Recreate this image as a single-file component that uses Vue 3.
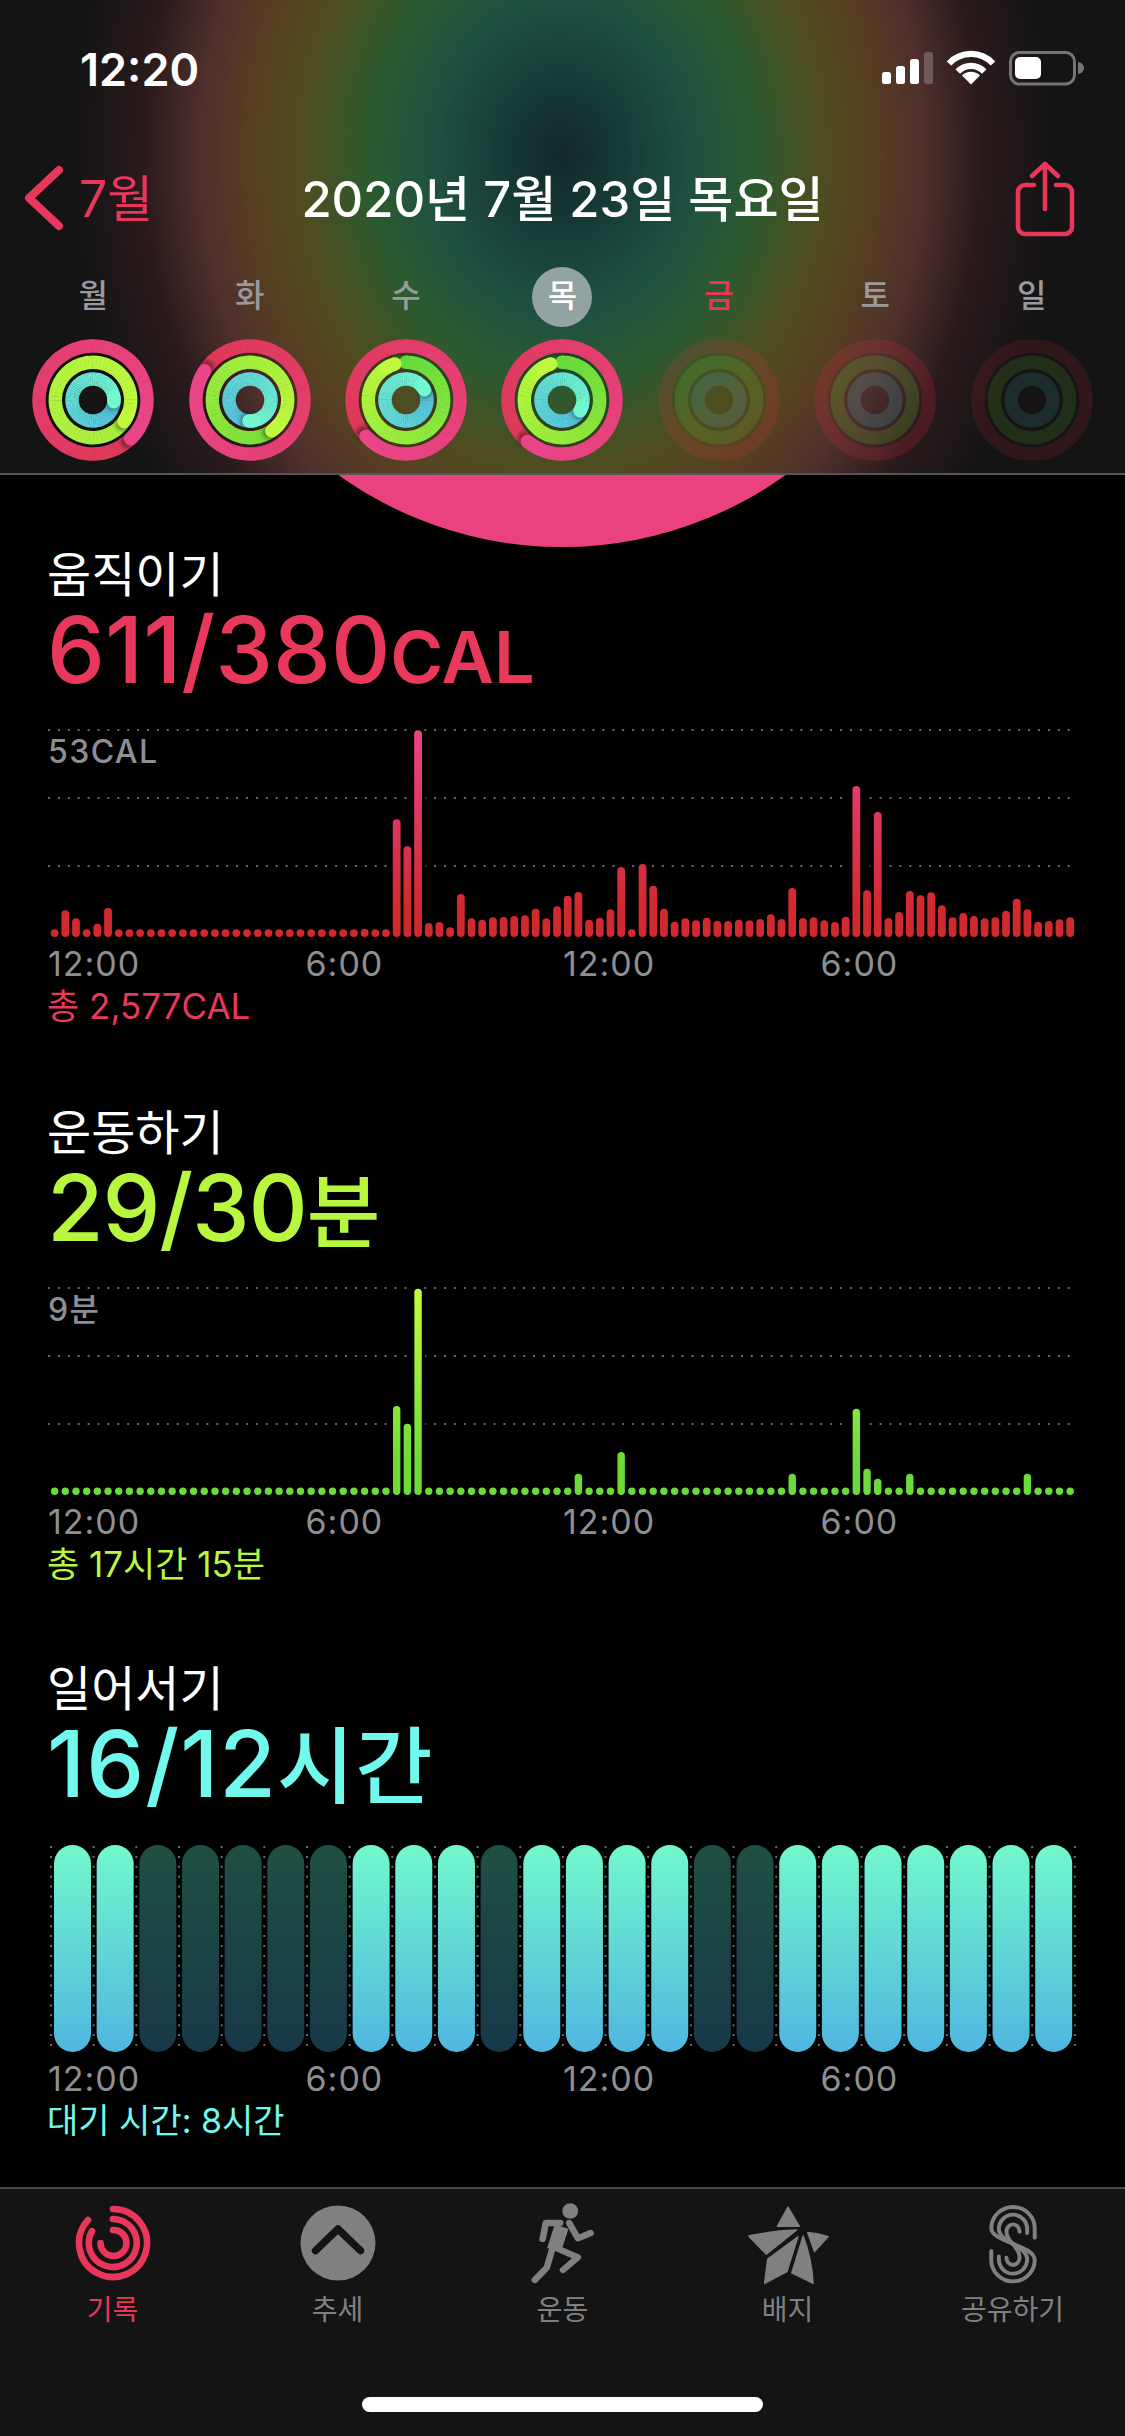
<script setup>
const hex = (s) => [1, 3, 5].map((i) => parseInt(s.slice(i, i + 2), 16))
const mix = (a, b, t) => {
  const x = hex(a)
  const y = hex(b)
  return `rgb(${x.map((v, i) => Math.round(v + (y[i] - v) * t)).join(',')})`
}
const pt = (r, deg) => {
  const a = (deg * Math.PI) / 180
  return [r * Math.sin(a), -r * Math.cos(a)]
}
const arc = (r, from, to) => {
  const [x0, y0] = pt(r, from)
  const [x1, y1] = pt(r, to)
  return `M${x0.toFixed(2)} ${y0.toFixed(2)}A${r} ${r} 0 ${to - from > 180 ? 1 : 0} 1 ${x1.toFixed(2)} ${y1.toFixed(2)}`
}
const buildRing = (r, head, span, c0, c1) => {
  const step = 6
  const tail = head - span
  const n = Math.ceil(span / step)
  const segments = []
  for (let i = 0; i < n; i++) {
    const from = tail + i * step
    const to = Math.min(head, from + step + 0.6)
    segments.push({ d: arc(r, from, to), color: mix(c0, c1, i / (n - 1)) })
  }
  const [sx, sy] = pt(r, head + 4)
  const [tx, ty] = pt(r, tail)
  return {
    r,
    segments,
    shadow: { x: sx, y: sy },
    headPath: arc(r, head - 14, head),
    headColor: c1,
    open: span < 360,
    tail: { x: tx, y: ty, color: c0 },
  }
}
const RED = ['#de3858', '#ea4589']
const CYAN = ['#52bfde', '#72f8d0']
const R = 54
const G = 37.7
const C = 21
const active = (h1, g, h3) => [
  buildRing(R, h1, 360, RED[0], RED[1]),
  buildRing(G, g[0], g[1], g[2], '#bff93e'),
  buildRing(C, h3, 360, CYAN[0], CYAN[1]),
]
const days = [
  { label: '월', rings: active(136, [125, 360, '#a8ee3f'], 95) },
  { label: '화', rings: active(303, [145, 360, '#78df3c'], 183) },
  { label: '수', rings: active(228, [343, 343, '#68db3c'], 61) },
  { label: '목', today: true, rings: active(220, [343, 343, '#68db3c'], 121) },
  { label: '금', red: true, rings: [], dim: 'dim-a' },
  { label: '토', rings: [], dim: 'dim-b' },
  { label: '일', rings: [], dim: 'dim-c' },
]
const dimRings = [
  { r: R, color: '#f02c48' },
  { r: G, color: '#7fe63a' },
  { r: C, color: '#5fd6dc' },
]

const barX = (i) => 54.6 + 10.69 * i
const BASE = 215
const dots = (n, v = 690) => Array(n).fill(v)
const moveTops = [
  690, 630, 654, 690, 670, 622, ...dots(23), 685, 690, 690, 357, 438, 90, 668, 665, 681, 581, 654, 658, 651,
  650, 647, 645, 625, 654, 618, 586, 575, 658, 652, 627, 500, 689, 491, 556, 625, 664, 654, 660, 652, 661,
  662, 658, 660, 656, 642, 656, 563, 653, 651, 660, 665, 649, 257, 570, 335, 653, 635, 572, 585, 576, 615,
  651, 638, 647, 654, 651, 631, 595, 627, 664, 662, 657, 651,
]
const moveBars = moveTops.map((t, i) => {
  const h = Math.max(7.8, (710 - t) / 3)
  return { x: barX(i) - 3.9, y: BASE - h, h }
})
const exTops = { 32: 437, 33: 490, 34: 85, 49: 640, 53: 575, 69: 640, 75: 445, 76: 625, 77: 655, 80: 640, 91: 640 }
const exerciseBars = Array.from({ length: 96 }, (_, i) => {
  const h = exTops[i] ? (704 - exTops[i]) / 3 : 7.4
  return { x: barX(i) - 3.7, y: BASE - h, h }
})
const gridY = [8, 76, 144]

const standPattern = '110000011101111001111111'
const standBars = standPattern.split('').map((c, i) => ({ x: 54 + i * 42.66, on: c === '1' }))
const standLines = Array.from({ length: 25 }, (_, i) => 51 + i * 42.66)

const axis = ['12:00', '6:00', '12:00', '6:00']
</script>

<template>
  <div class="phone">
    <header class="header">
      <div class="status">
        <span class="clock">12:20</span>
        <svg class="status-icons" width="205" height="40" viewBox="880 50 205 40">
          <g fill="#fff">
            <rect x="882" y="73" width="9" height="12" rx="2.5" />
            <rect x="896" y="67" width="9" height="18" rx="2.5" />
            <rect x="910" y="60" width="9" height="25" rx="2.5" />
            <rect x="924" y="53" width="9" height="32" rx="2.5" opacity=".22" />
          </g>
          <g fill="none" stroke="#fff" stroke-width="6.2">
            <path d="M949 64.5A30 30 0 0 1 993 64.5" />
            <path d="M957.8 72.7A18 18 0 0 1 984.2 72.7" />
          </g>
          <path fill="#fff" d="M971 85.5L962 76.5A12.7 12.7 0 0 1 980 76.5Z" />
          <rect x="1010.5" y="53.5" width="64" height="31.5" rx="9" fill="none" stroke="#757575" stroke-width="3" />
          <rect x="1015" y="58" width="26" height="22" rx="5" fill="#fff" />
          <path fill="#757575" d="M1078 63A6 6 0 0 1 1078 75Z" />
        </svg>
      </div>
      <nav class="nav">
        <div class="back">
          <svg width="44" height="70" viewBox="0 0 44 70">
            <path d="M36 7L6 35L36 63" fill="none" stroke="#e8375a" stroke-width="8" stroke-linecap="round" stroke-linejoin="round" />
          </svg>
          <span>7월</span>
        </div>
        <h1 class="title">2020년 7월 23일 목요일</h1>
        <svg class="share" width="64" height="80" viewBox="0 0 64 80" fill="none" stroke="#e8375a" stroke-width="4.6" stroke-linecap="round" stroke-linejoin="round">
          <path d="M21 27H12A7 7 0 0 0 5 34V69A7 7 0 0 0 12 76H52A7 7 0 0 0 59 69V34A7 7 0 0 0 52 27H43" />
          <path d="M32 51V6" />
          <path d="M19 18L32 6L45 18" />
        </svg>
      </nav>
      <div class="week">
        <div v-for="d in days" :key="d.label" class="day">
          <span class="day-label" :class="{ today: d.today, red: d.red }">{{ d.label }}</span>
          <svg class="rings" width="122" height="122" viewBox="-61 -61 122 122">
            <g v-if="d.dim" :class="d.dim">
              <circle v-for="ring in dimRings" :key="ring.r" :r="ring.r" fill="none" :stroke="ring.color" stroke-width="13.4" />
            </g>
            <g v-else>
              <circle r="46" fill="none" stroke="#000" stroke-opacity=".22" stroke-width="3.4" />
              <circle r="29.4" fill="none" stroke="#000" stroke-opacity=".22" stroke-width="3.4" />
              <g v-for="ring in d.rings" :key="ring.r" fill="none" stroke-width="13.4">
                <circle v-if="ring.open" :cx="ring.tail.x" :cy="ring.tail.y" r="6.7" :fill="ring.tail.color" />
                <path v-for="(s, i) in ring.segments" :key="i" :d="s.d" :stroke="s.color" />
                <circle v-if="!ring.open" class="cap-shadow" :cx="ring.shadow.x" :cy="ring.shadow.y" r="7" fill="#000" fill-opacity=".4" />
                <path :d="ring.headPath" :stroke="ring.headColor" stroke-linecap="round" />
              </g>
            </g>
          </svg>
        </div>
      </div>
    </header>

    <main class="main">
      <div class="big-ring"></div>

      <section class="section">
        <h2 class="sec-title">움직이기</h2>
        <p class="sec-value move">611/380<span class="unit-latin">CAL</span></p>
        <div class="chart">
          <svg width="1125" height="218" viewBox="0 0 1125 218">
            <defs>
              <linearGradient id="moveGrad" gradientUnits="userSpaceOnUse" x1="0" y1="8" x2="0" y2="215">
                <stop offset="0" stop-color="#ea4589" />
                <stop offset=".55" stop-color="#d93350" />
                <stop offset=".85" stop-color="#d12a2e" />
              </linearGradient>
            </defs>
            <line v-for="y in gridY" :key="y" class="grid" x1="48" x2="1070" :y1="y" :y2="y" />
            <rect v-for="(b, i) in moveBars" :key="'h' + i" :x="b.x" :y="b.y" width="7.8" :height="b.h" rx="3.9" fill="#000" stroke="#000" stroke-width="7" />
            <rect v-for="(b, i) in moveBars" :key="i" :x="b.x" :y="b.y" width="7.8" :height="b.h" rx="3.9" fill="url(#moveGrad)" />
          </svg>
          <span class="chart-max">53CAL</span>
        </div>
        <div class="axis"><span v-for="(a, i) in axis" :key="i">{{ a }}</span></div>
        <p class="total move">총 2,577CAL</p>
      </section>

      <section class="section">
        <h2 class="sec-title">운동하기</h2>
        <p class="sec-value exercise tight">29/30<span class="unit-ko">분</span></p>
        <div class="chart">
          <svg width="1125" height="218" viewBox="0 0 1125 218">
            <defs>
              <linearGradient id="exGrad" gradientUnits="userSpaceOnUse" x1="0" y1="8" x2="0" y2="215">
                <stop offset="0" stop-color="#c5fb3e" />
                <stop offset=".5" stop-color="#90e93a" />
                <stop offset=".85" stop-color="#6bdb37" />
              </linearGradient>
            </defs>
            <line v-for="y in gridY" :key="y" class="grid" x1="48" x2="1070" :y1="y" :y2="y" />
            <rect v-for="(b, i) in exerciseBars" :key="'h' + i" :x="b.x" :y="b.y" width="7.4" :height="b.h" rx="3.7" fill="#000" stroke="#000" stroke-width="7" />
            <rect v-for="(b, i) in exerciseBars" :key="i" :x="b.x" :y="b.y" width="7.4" :height="b.h" rx="3.7" fill="url(#exGrad)" />
          </svg>
          <span class="chart-max">9분</span>
        </div>
        <div class="axis"><span v-for="(a, i) in axis" :key="i">{{ a }}</span></div>
        <p class="total exercise">총 17시간 15분</p>
      </section>

      <section class="section stand-section">
        <h2 class="sec-title">일어서기</h2>
        <p class="sec-value stand wide">16/12<span class="unit-ko-lg">시간</span></p>
        <div class="chart stand-chart">
          <svg width="1125" height="208" viewBox="0 0 1125 208">
            <defs>
              <linearGradient id="standOn" x1="0" y1="0" x2="0" y2="1">
                <stop offset="0" stop-color="#72f8cc" />
                <stop offset="1" stop-color="#50b6e0" />
              </linearGradient>
              <linearGradient id="standOff" x1="0" y1="0" x2="0" y2="1">
                <stop offset="0" stop-color="#1f4f42" />
                <stop offset="1" stop-color="#183848" />
              </linearGradient>
            </defs>
            <line v-for="x in standLines" :key="x" class="grid" :x1="x" :x2="x" y1="1" y2="202" />
            <rect v-for="b in standBars" :key="b.x" :x="b.x" y="0" width="37" height="207" rx="18.5" :fill="b.on ? 'url(#standOn)' : 'url(#standOff)'" />
          </svg>
        </div>
        <div class="axis stand-axis"><span v-for="(a, i) in axis" :key="i">{{ a }}</span></div>
        <p class="total stand">대기 시간: 8시간</p>
      </section>
    </main>

    <footer class="tabbar">
      <div class="tabs">
        <div class="tab active">
          <svg width="80" height="84" viewBox="-40 -42 80 84" fill="none" stroke="#e8375a" stroke-width="6.6" stroke-linecap="round">
            <path d="M0 -34A34 34 0 1 1 -25 -23" />
            <path d="M0 -24A24 24 0 1 1 -21 -12" />
            <path d="M0 -13A13 13 0 1 1 -12.5 0" />
          </svg>
          <span>기록</span>
        </div>
        <div class="tab">
          <svg width="80" height="84" viewBox="-40 -42 80 84">
            <circle r="37.5" fill="#808080" />
            <path d="M-22.5 7.7L0 -14L22.5 7.7" fill="none" stroke="#141414" stroke-width="7.4" stroke-linecap="round" stroke-linejoin="round" />
          </svg>
          <span>추세</span>
        </div>
        <div class="tab">
          <svg width="80" height="84" viewBox="6 18 232 252" preserveAspectRatio="none">
            <circle cx="143" cy="48" r="23" fill="#808080" />
            <g fill="none" stroke="#808080" stroke-width="19" stroke-linecap="round" stroke-linejoin="round">
              <path d="M114 84H72L63 132" />
              <path d="M140 84L165 130L202 114" />
              <path d="M100 158L165 187L122 225" />
              <path d="M90 165L75 218L40 255" />
              <path d="M118 95L96 165" stroke-width="42" stroke-linecap="butt" />
            </g>
          </svg>
          <span>운동</span>
        </div>
        <div class="tab">
          <svg width="84" height="84" viewBox="651 18 244 252" preserveAspectRatio="none" fill="#808080" stroke="#808080" stroke-width="4" stroke-linejoin="round">
            <path d="M773 36L806 94H742Z" />
            <path d="M659 123Q730 107 798 105L710 178Z" />
            <path d="M802 125L770 230L705 265L714 192Z" />
            <path d="M817 123L784 234L846 265Q842 190 817 123Z" />
            <path d="M830 112Q860 114 890 125L850 170Z" />
          </svg>
          <span>배지</span>
        </div>
        <div class="tab">
          <svg width="80" height="84" viewBox="1310 18 232 252" preserveAspectRatio="none" fill="none" stroke="#808080" stroke-width="11.5" stroke-linecap="round">
            <path d="M1489 128V100A63 64 0 0 0 1363 100C1363 142 1489 150 1489 195A63 64 0 0 1 1363 195V168" />
            <path d="M1467 114V102A41 43 0 0 0 1385 102C1385 142 1467 152 1467 193A41 43 0 0 1 1385 193V184" />
            <path d="M1445 110A19 22 0 0 0 1407 110C1407 142 1445 152 1445 188A19 22 0 0 1 1407 188" />
          </svg>
          <span>공유하기</span>
        </div>
      </div>
      <div class="home-indicator"></div>
    </footer>
  </div>
</template>

<style scoped>
.phone {
  width: 1125px;
  height: 2436px;
  display: flex;
  flex-direction: column;
  overflow: hidden;
  background: #000;
  color: #fff;
  font-family: Inter, "Noto Sans CJK KR", sans-serif;
}
.header {
  height: 475px;
  box-sizing: border-box;
  flex: none;
  border-bottom: 2px solid #555;
  background:
    radial-gradient(ellipse 490px 590px at 562px 155px,
      #12282a 0, #163a36 60px, #1f5142 130px, #2b5a30 190px, #4f4d20 260px,
      #573f22 310px, #4f302c 360px, #2a1a1c 420px, #141414 490px);
  background-color: #141414;
}
.status {
  height: 138px;
  display: flex;
  align-items: center;
  justify-content: space-between;
  padding: 0 40px 0 80px;
}
.clock {
  font-size: 45px;
  font-weight: 600;
}
.nav {
  height: 120px;
  display: grid;
  grid-template-columns: 1fr auto 1fr;
  align-items: center;
  padding: 0 23px;
}
.back {
  display: flex;
  align-items: center;
  gap: 12px;
  color: #e8375a;
  font-size: 50px;
}
.back span {
  padding-bottom: 6px;
}
.title {
  margin: 0;
  padding-bottom: 6px;
  font-size: 49px;
  font-weight: 500;
  white-space: nowrap;
}
.share {
  justify-self: end;
  margin-right: 25px;
}
.week {
  display: grid;
  grid-template-columns: repeat(7, 1fr);
  padding: 9px 15px 0;
}
.day {
  display: flex;
  flex-direction: column;
  align-items: center;
  gap: 12px;
}
.day-label {
  width: 60px;
  height: 60px;
  line-height: 58px;
  border-radius: 50%;
  text-align: center;
  font-size: 32px;
  font-weight: 500;
  color: #9a9a9e;
}
.day-label.today {
  background: #93a3a3;
  color: #fff;
}
.day-label.red {
  color: #e8375a;
}
.dim-a {
  opacity: 0.15;
}
.dim-b {
  opacity: 0.17;
}
.dim-c {
  opacity: 0.12;
}
.cap-shadow {
  filter: blur(2px);
}
.main {
  position: relative;
  flex: 1;
  min-height: 0;
  overflow: hidden;
}
.big-ring {
  position: absolute;
  left: 179px;
  top: -694px;
  width: 766px;
  height: 766px;
  border-radius: 50%;
  background: #ea4280;
}
.section {
  position: relative;
  padding: 70px 0 7px;
}
.stand-section {
  padding-top: 68px;
}
.sec-title {
  margin: 0;
  padding-left: 47px;
  font-size: 48px;
  line-height: 60px;
  font-weight: 400;
}
.sec-value {
  margin: 0;
  padding-left: 47px;
  height: 90px;
  line-height: 90px;
  font-size: 92px;
  font-weight: 500;
  white-space: nowrap;
}
.tight {
  letter-spacing: -1.2px;
}
.wide {
  letter-spacing: 1px;
}
.unit-latin {
  font-size: 72px;
  font-weight: 600;
}
.unit-ko {
  font-size: 80px;
}
.unit-ko-lg {
  font-size: 84px;
}
.move {
  color: #e8385c;
}
.exercise {
  color: #b9f63f;
}
.stand {
  color: #72f9ee;
}
.chart {
  position: relative;
  margin-top: 27px;
  height: 218px;
}
.chart svg {
  display: block;
}
.stand-chart {
  margin-top: 36px;
  height: 208px;
}
.grid {
  stroke: #6a6a6a;
  stroke-width: 2;
  stroke-dasharray: 2 7.9;
}
.chart-max {
  position: absolute;
  left: 48px;
  top: 12px;
  font-size: 32px;
  line-height: 36px;
  font-weight: 500;
  letter-spacing: 1.4px;
  color: #8e8e93;
}
.axis {
  display: grid;
  grid-template-columns: repeat(4, 257.5px);
  margin-top: 4px;
  padding-left: 48px;
  height: 40px;
  line-height: 40px;
  font-size: 34px;
  letter-spacing: 1px;
  color: #8e8e93;
}
.stand-axis {
  margin-top: 6px;
}
.total {
  margin: 2px 0 0;
  padding-left: 47px;
  height: 40px;
  line-height: 40px;
  font-size: 35px;
}
.total.stand {
  font-size: 34px;
}
.tabbar {
  position: relative;
  flex: none;
  height: 249px;
  box-sizing: border-box;
  border-top: 2px solid #4a4a4a;
  background: #141414;
}
.tabs {
  display: grid;
  grid-template-columns: repeat(5, 225px);
  padding-top: 12px;
}
.tab {
  display: flex;
  flex-direction: column;
  align-items: center;
  color: #808080;
  font-size: 28px;
  line-height: 40px;
}
.tab svg {
  display: block;
}
.tab span {
  margin-top: 5px;
}
.tab.active {
  color: #e8375a;
}
.home-indicator {
  position: absolute;
  left: 362px;
  top: 208px;
  width: 401px;
  height: 15px;
  border-radius: 8px;
  background: #fff;
}
</style>
